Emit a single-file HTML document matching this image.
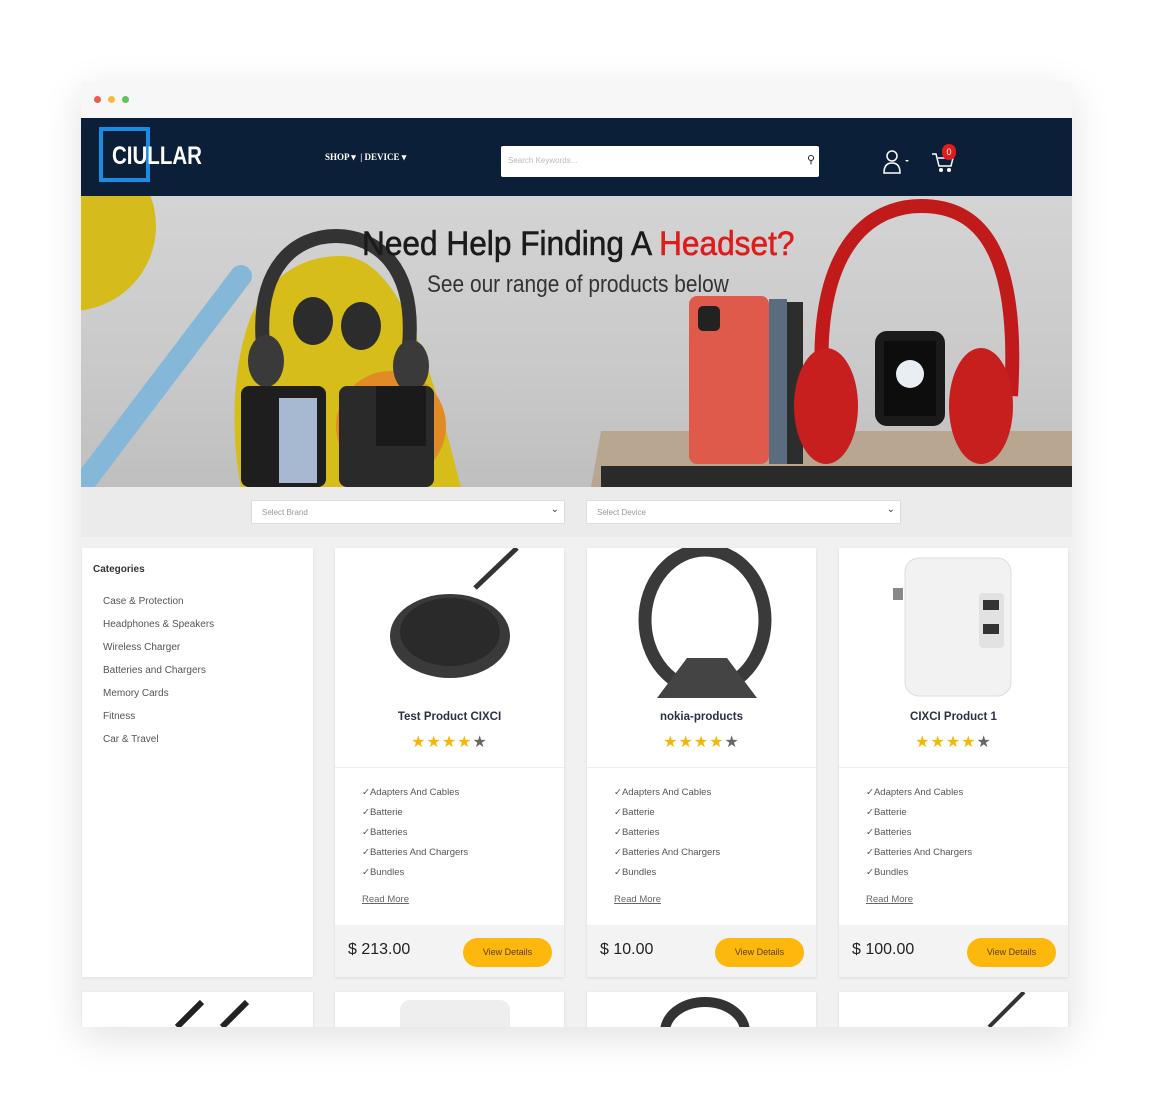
<!DOCTYPE html>
<html><head><meta charset="utf-8"><style>
*{box-sizing:border-box;margin:0;padding:0}
body{width:1168px;height:1108px;background:#fff;font-family:"Liberation Sans",sans-serif;position:relative;overflow:hidden}
.win{position:absolute;left:81px;top:82px;width:991px;height:945px;background:#f1f1f1;box-shadow:0 10px 40px rgba(0,0,0,.12);overflow:hidden;border-radius:4px 4px 0 0}
.bar{height:36px;background:#f7f7f7;position:relative}
.dot{position:absolute;top:14px;width:7px;height:7px;border-radius:50%}
.hdr{height:78px;background:#0c1f38;position:relative;color:#fff}
.logo{position:absolute;left:18px;top:9px;width:51px;height:55px;border:4px solid #1b8ce3}
.logot{position:absolute;left:31px;top:24px;font-size:25px;font-weight:bold;letter-spacing:0;transform:scaleX(.82);transform-origin:left}
.nav{position:absolute;left:244px;top:34px;font-family:"Liberation Serif",serif;font-size:9px;font-weight:bold}
.search{position:absolute;left:420px;top:28px;width:318px;height:31px;background:#fff;border-radius:2px;color:#bbb;font-size:8px;padding:10px 7px}
.banner{height:291px;background:linear-gradient(180deg,#d4d4d4,#c9c9c9 60%,#bfbfbf);position:relative;overflow:hidden}
.filt{height:50px;background:#ebebeb;position:relative}
.sel{position:absolute;top:13px;height:24px;background:#fff;border:1px solid #ddd;font-size:8px;color:#999;padding:7px 10px}
.sel:after{content:"⌄";position:absolute;right:5px;top:3px;color:#444;font-size:10px}
.side{position:absolute;left:1px;top:466px;width:231px;height:429px;background:#fff;box-shadow:0 1px 3px rgba(0,0,0,.08)}
.side h4{position:absolute;left:11px;top:16px;font-size:10px;color:#333}
.side ul{list-style:none;position:absolute;left:21px;top:42px;font-size:10px;color:#555;line-height:23px}
.card{position:absolute;top:466px;width:229px;height:429px;background:#fff;box-shadow:0 1px 3px rgba(0,0,0,.1)}
.img{position:absolute;left:0;top:0;width:229px;height:155px}
.name{position:absolute;top:163px;width:100%;text-align:center;font-size:11.5px;color:#2a3242;font-weight:bold;}
.stars{position:absolute;top:184px;width:100%;text-align:center;font-size:16px;color:#f5b70a;letter-spacing:1px}
.stars b{color:#666;font-weight:normal}
.sep{position:absolute;top:219px;left:0;width:100%;border-top:1px solid #eee}
.feat{position:absolute;left:27px;top:235px;font-size:9.5px;color:#555;line-height:20px}
.rm{position:absolute;left:27px;top:346px;font-size:9.5px;color:#666;text-decoration:underline}
.foot{position:absolute;left:0;bottom:0;width:100%;height:52px;background:#f3f3f3}
.price{position:absolute;left:13px;top:16px;font-size:16px;color:#222}
.btn{position:absolute;right:12px;top:13px;width:89px;height:29px;background:#fdb70d;border-radius:15px;font-size:9px;color:#5a4300;text-align:center;line-height:29px}
.card2{position:absolute;top:910px;width:229px;height:60px;background:#fff;box-shadow:0 1px 3px rgba(0,0,0,.1);overflow:hidden}
</style></head><body>
<div class="win">
 <div class="bar"><div class="dot" style="left:13px;background:#f05b4f"></div><div class="dot" style="left:27px;background:#f6bb3c"></div><div class="dot" style="left:41px;background:#5cc552"></div></div>
 <div class="hdr">
  <div class="logo"></div><div class="logot">CIULLAR</div>
  <div class="nav">SHOP ▾ &nbsp;| DEVICE ▾</div>
  <div class="search">Search Keywords...<span style="position:absolute;right:4px;top:7px;color:#222;font-size:11px">⚲</span></div>
  <svg style="position:absolute;left:800px;top:30px" width="30" height="26" viewBox="0 0 30 26"><circle cx="11" cy="8" r="5" fill="none" stroke="#fff" stroke-width="1.5"/><path d="M3 25c0-8 4-10 8-10s8 2 8 10z" fill="none" stroke="#fff" stroke-width="1.5"/><path d="M24 12l2 2 2-2z" fill="#fff"/></svg>
  <svg style="position:absolute;left:850px;top:30px" width="24" height="26" viewBox="0 0 24 26"><path d="M1 6h4l3 12h12l2-8H7" fill="none" stroke="#fff" stroke-width="1.5"/><circle cx="10" cy="22" r="2" fill="#fff"/><circle cx="18" cy="22" r="2" fill="#fff"/></svg>
  <div style="position:absolute;left:861px;top:26px;width:14px;height:16px;border-radius:7px;background:#e31b1b;font-size:9px;text-align:center;line-height:16px">0</div>
 </div>
 <div class="banner">
  <svg width="991" height="291" style="position:absolute;left:0;top:0">
   <circle cx="-10" cy="30" r="85" fill="#d6bb1c"/>
   <path d="M0 291L160 80" stroke="#85b8d8" stroke-width="22" stroke-linecap="round"/>
   <path d="M170 120C140 200 160 291 160 291H380C360 220 330 60 260 60 220 60 190 80 170 120z" fill="#d6bd1a"/>
   <circle cx="310" cy="230" r="55" fill="#e08b25"/>
   <path d="M182 150C175 70 215 40 255 40S335 70 328 150" stroke="#333" stroke-width="14" fill="none"/>
   <ellipse cx="185" cy="165" rx="18" ry="26" fill="#3a3a3a"/><ellipse cx="330" cy="170" rx="18" ry="26" fill="#3a3a3a"/>
   <ellipse cx="232" cy="125" rx="20" ry="24" fill="#2c2c2c"/><ellipse cx="280" cy="130" rx="20" ry="24" fill="#2c2c2c"/>
   <rect x="160" y="190" width="85" height="101" rx="8" fill="#1e1e1e"/><rect x="198" y="202" width="38" height="85" fill="#a6b9d0"/>
   <rect x="258" y="190" width="95" height="101" rx="8" fill="#2a2a2a"/><rect x="295" y="190" width="50" height="60" fill="#1a1a1a"/>
   <path d="M520 235H991V291H510z" fill="#b8a691"/><rect x="520" y="270" width="471" height="21" fill="#2a2a2a"/>
   <rect x="608" y="100" width="80" height="168" rx="8" fill="#e05a4b"/><rect x="617" y="110" width="22" height="25" rx="5" fill="#222"/>
   <rect x="688" y="103" width="18" height="165" fill="#5a6c80"/><rect x="706" y="106" width="16" height="162" fill="#2d2d2d"/>
   <path d="M742 200C730 50 790 10 840 10S940 40 930 200" stroke="#c11a1a" stroke-width="14" fill="none"/>
   <ellipse cx="745" cy="210" rx="32" ry="58" fill="#c71e1e"/><ellipse cx="900" cy="210" rx="32" ry="58" fill="#c71e1e"/>
   <rect x="794" y="135" width="70" height="95" rx="12" fill="#1a1a1a"/><rect x="803" y="145" width="52" height="75" fill="#0d0d0d"/>
   <circle cx="829" cy="178" r="14" fill="#e8eef3"/>
  </svg>
  <div style="position:absolute;left:281px;top:29px;font-size:34px;color:#1b1b1b;transform:scaleX(.93);transform-origin:left;white-space:nowrap;-webkit-text-stroke:.6px #1b1b1b">Need Help Finding A <span style="color:#e01b1b;-webkit-text-stroke:.6px #e01b1b">Headset?</span></div>
  <div style="position:absolute;left:346px;top:75px;font-size:24px;color:#333;transform:scaleX(.87);transform-origin:left;white-space:nowrap">See our range of products below</div>
 </div>
 <div class="filt"><div class="sel" style="left:170px;width:314px">Select Brand</div><div class="sel" style="left:505px;width:315px">Select Device</div></div>
 <div class="side"><h4>Categories</h4><ul><li>Case &amp; Protection</li><li>Headphones &amp; Speakers</li><li>Wireless Charger</li><li>Batteries and Chargers</li><li>Memory Cards</li><li>Fitness</li><li>Car &amp; Travel</li></ul></div>

 <div class="card" style="left:254px"><svg class="img"><path d="M140 40L182 0" stroke="#333" stroke-width="5"/><ellipse cx="115" cy="88" rx="60" ry="42" fill="#3a3a3a"/><ellipse cx="115" cy="84" rx="50" ry="34" fill="#2a2a2a"/></svg>
  <div class="name">Test Product CIXCI</div><div class="stars">★★★★<b>★</b></div><div class="sep"></div>
  <div class="feat">✓Adapters And Cables<br>✓Batterie<br>✓Batteries<br>✓Batteries And Chargers<br>✓Bundles</div><div class="rm">Read More</div>
  <div class="foot"><div class="price">$ 213.00</div><div class="btn">View Details</div></div></div>
 <div class="card" style="left:506px"><svg class="img"><ellipse cx="118" cy="72" rx="60" ry="70" fill="none" stroke="#3a3a3a" stroke-width="13"/><path d="M70 150L100 110h40l30 40z" fill="#444"/></svg>
  <div class="name">nokia-products</div><div class="stars">★★★★<b>★</b></div><div class="sep"></div>
  <div class="feat">✓Adapters And Cables<br>✓Batterie<br>✓Batteries<br>✓Batteries And Chargers<br>✓Bundles</div><div class="rm">Read More</div>
  <div class="foot"><div class="price">$ 10.00</div><div class="btn">View Details</div></div></div>
 <div class="card" style="left:758px"><svg class="img"><rect x="66" y="10" width="106" height="138" rx="14" fill="#f2f2f2" stroke="#ddd"/><rect x="140" y="45" width="25" height="55" rx="4" fill="#e2e2e2"/><rect x="144" y="52" width="16" height="10" fill="#333"/><rect x="144" y="76" width="16" height="10" fill="#333"/><rect x="54" y="40" width="10" height="12" fill="#888"/></svg>
  <div class="name">CIXCI Product 1</div><div class="stars">★★★★<b>★</b></div><div class="sep"></div>
  <div class="feat">✓Adapters And Cables<br>✓Batterie<br>✓Batteries<br>✓Batteries And Chargers<br>✓Bundles</div><div class="rm">Read More</div>
  <div class="foot"><div class="price">$ 100.00</div><div class="btn">View Details</div></div></div>

 <div class="card2" style="left:1px;width:231px"><svg width="231" height="60"><path d="M95 35l25-25M140 35l25-25" stroke="#222" stroke-width="6"/></svg></div>
 <div class="card2" style="left:254px"><svg width="229" height="60"><rect x="65" y="8" width="110" height="40" rx="10" fill="#eee"/></svg></div>
 <div class="card2" style="left:506px"><svg width="229" height="60"><ellipse cx="118" cy="40" rx="40" ry="30" fill="none" stroke="#333" stroke-width="10"/></svg></div>
 <div class="card2" style="left:758px"><svg width="229" height="60"><path d="M150 35L185 0" stroke="#333" stroke-width="4"/></svg></div>
</div>
</body></html>
